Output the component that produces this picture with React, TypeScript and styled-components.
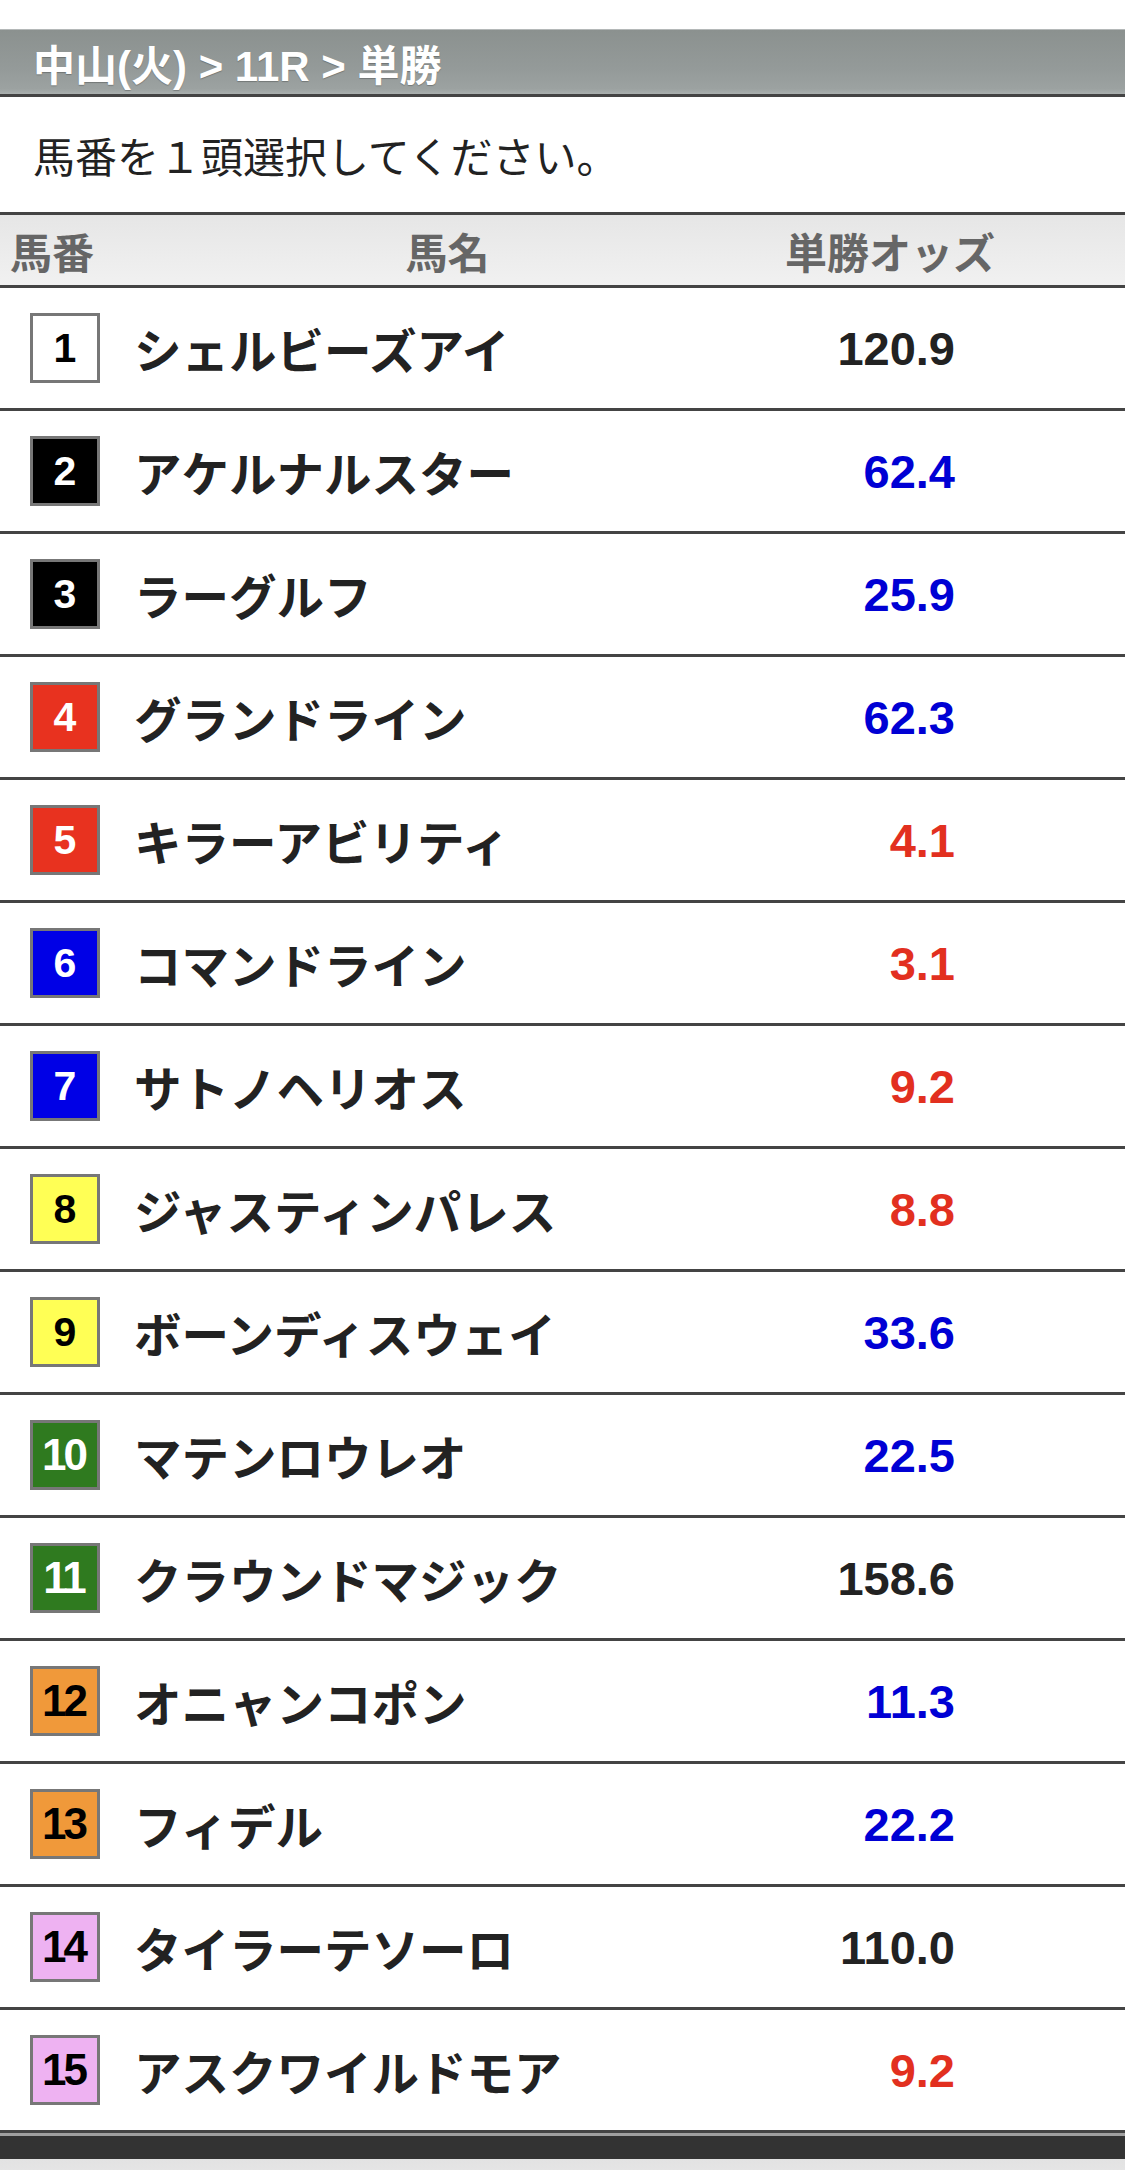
import React from "react";
import styled, { createGlobalStyle } from "styled-components";

const GlobalStyle = createGlobalStyle`
  html, body {
    margin: 0;
    padding: 0;
    background: #ffffff;
  }
  body {
    font-family: "Liberation Sans", "Noto Sans CJK JP", sans-serif;
    color: #222;
  }
`;

const Page = styled.div`
  width: 1125px;
  padding-top: 29px;
  background: #ffffff;
`;

const TitleBar = styled.div`
  display: flex;
  align-items: center;
  padding-left: 33px;
  background: linear-gradient(#8b918f 0%, #949a99 60%, #9ca2a1 92%, #aab0af 100%);
  border-top: 1px solid #b4b8b8;
  border-bottom: 3px solid #444;
  box-sizing: border-box;
  height: 68px;
`;

const Title = styled.h1`
  margin: 0;
  font-size: 42px;
  font-weight: 700;
  color: #ffffff;
  text-shadow: 0 1px 1px rgba(0, 0, 0, 0.25);
`;

const Instruction = styled.p`
  margin: 0;
  height: 115px;
  display: flex;
  align-items: center;
  padding-left: 33px;
  font-size: 42px;
  font-weight: 400;
  color: #222;
`;

const Grid = styled.div`
  display: grid;
  grid-template-columns: 115px 665px 1fr;
`;

const HeaderRow = styled(Grid)`
  height: 76px;
  box-sizing: border-box;
  border-top: 3px solid #444;
  border-bottom: 3px solid #444;
  background: linear-gradient(#e6e6e6, #f1f1f1);
  align-items: center;
`;

const HeaderCell = styled.div<{ $align: "left" | "center" }>`
  font-size: 42px;
  font-weight: 700;
  color: #666;
  text-align: ${(p) => p.$align};
  padding-left: ${(p) => (p.$align === "left" ? "10px" : "0")};
`;

const OddsHeader = styled(HeaderCell)`
  padding-right: 125px;
`;

const Row = styled(Grid)`
  height: 123px;
  box-sizing: border-box;
  border-bottom: 3px solid #444;
  align-items: center;
`;

const Badge = styled.div<{ $bg: string; $fg: string; $wide: boolean }>`
  width: 70px;
  height: 70px;
  box-sizing: border-box;
  margin-left: 30px;
  border: 3px solid #777;
  background: ${(p) => p.$bg};
  color: ${(p) => p.$fg};
  display: flex;
  align-items: center;
  justify-content: center;
  font-size: ${(p) => (p.$wide ? "44px" : "41px")};
  font-weight: 700;
  letter-spacing: ${(p) => (p.$wide ? "-3px" : "0")};
  padding-right: ${(p) => (p.$wide ? "3px" : "0")};
`;

const Name = styled.div`
  padding-left: 19px;
  font-size: 47.5px;
  font-weight: 700;
  color: #222;
  white-space: nowrap;
`;

const Odds = styled.div<{ $color: string }>`
  text-align: right;
  padding-right: 170px;
  font-size: 47px;
  font-weight: 700;
  color: ${(p) => p.$color};
`;

const Footer = styled.div`
  border-top: 3px solid #a0a0a0;
  height: 23px;
  background: #333;
`;

const FooterBase = styled.div`
  height: 40px;
  background: linear-gradient(#e2e2e2, #ececec);
`;

type Horse = { no: number; name: string; odds: string };

const horses: Horse[] = [
  { no: 1, name: "シェルビーズアイ", odds: "120.9" },
  { no: 2, name: "アケルナルスター", odds: "62.4" },
  { no: 3, name: "ラーグルフ", odds: "25.9" },
  { no: 4, name: "グランドライン", odds: "62.3" },
  { no: 5, name: "キラーアビリティ", odds: "4.1" },
  { no: 6, name: "コマンドライン", odds: "3.1" },
  { no: 7, name: "サトノヘリオス", odds: "9.2" },
  { no: 8, name: "ジャスティンパレス", odds: "8.8" },
  { no: 9, name: "ボーンディスウェイ", odds: "33.6" },
  { no: 10, name: "マテンロウレオ", odds: "22.5" },
  { no: 11, name: "クラウンドマジック", odds: "158.6" },
  { no: 12, name: "オニャンコポン", odds: "11.3" },
  { no: 13, name: "フィデル", odds: "22.2" },
  { no: 14, name: "タイラーテソーロ", odds: "110.0" },
  { no: 15, name: "アスクワイルドモア", odds: "9.2" },
];

const badgeMap: Record<number, { bg: string; fg: string }> = {
  1: { bg: "#ffffff", fg: "#000000" },
  2: { bg: "#000000", fg: "#ffffff" },
  3: { bg: "#000000", fg: "#ffffff" },
  4: { bg: "#e8321f", fg: "#ffffff" },
  5: { bg: "#e8321f", fg: "#ffffff" },
  6: { bg: "#0000e6", fg: "#ffffff" },
  7: { bg: "#0000e6", fg: "#ffffff" },
  8: { bg: "#ffff55", fg: "#000000" },
  9: { bg: "#ffff55", fg: "#000000" },
  10: { bg: "#2f7a1f", fg: "#ffffff" },
  11: { bg: "#2f7a1f", fg: "#ffffff" },
  12: { bg: "#f0993a", fg: "#000000" },
  13: { bg: "#f0993a", fg: "#000000" },
  14: { bg: "#eeb2f2", fg: "#000000" },
  15: { bg: "#eeb2f2", fg: "#000000" },
};

const oddsColor = (odds: string): string => {
  const v = parseFloat(odds);
  if (v >= 100) return "#222222";
  if (v >= 10) return "#0000d4";
  return "#e2301f";
};

export default function App() {
  return (
    <>
      <GlobalStyle />
      <Page>
        <TitleBar>
          <Title>中山(火) &gt; 11R &gt; 単勝</Title>
        </TitleBar>
        <Instruction>馬番を１頭選択してください。</Instruction>
        <HeaderRow>
          <HeaderCell $align="left">馬番</HeaderCell>
          <HeaderCell $align="center">馬名</HeaderCell>
          <OddsHeader $align="center">単勝オッズ</OddsHeader>
        </HeaderRow>
        {horses.map((h) => {
          const c = badgeMap[h.no];
          return (
            <Row key={h.no}>
              <Badge $bg={c.bg} $fg={c.fg} $wide={h.no >= 10}>
                {h.no}
              </Badge>
              <Name>{h.name}</Name>
              <Odds $color={oddsColor(h.odds)}>{h.odds}</Odds>
            </Row>
          );
        })}
        <Footer />
        <FooterBase />
      </Page>
    </>
  );
}
